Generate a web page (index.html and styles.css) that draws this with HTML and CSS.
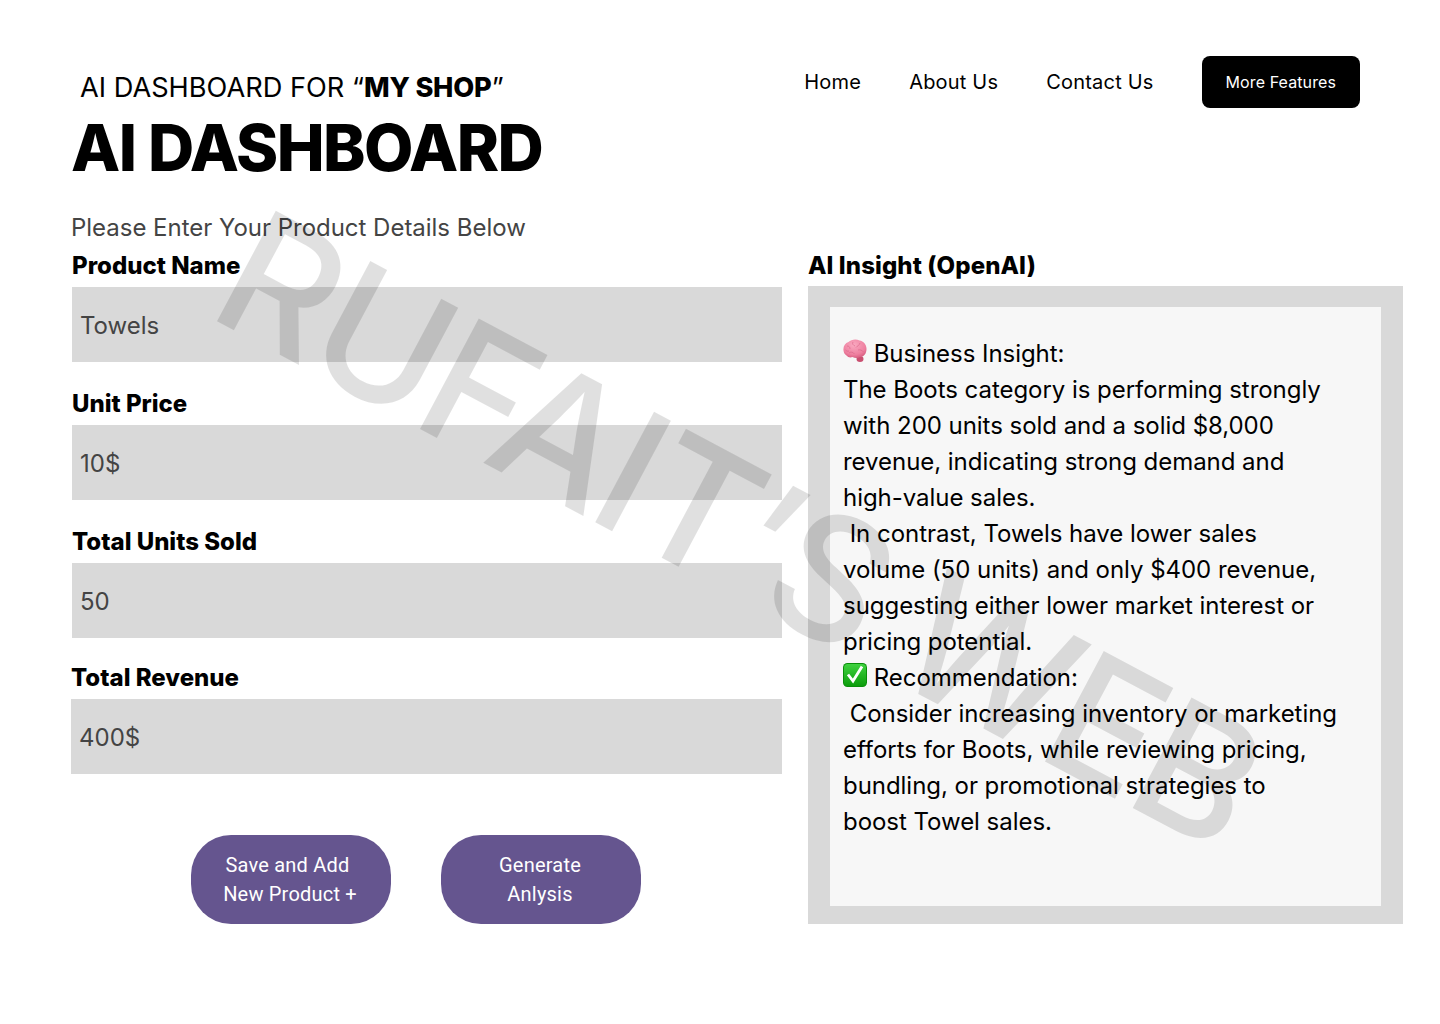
FILE: index.html
```html
<!DOCTYPE html>
<html lang="en">

<head>
    <meta charset="UTF-8">
    <meta name="viewport" content="width=device-width, initial-scale=1.0">
    <title>AI Dashboard</title>
    <link rel="stylesheet" href="styles.css">
</head>

<body>
    <div class="page">
        <header class="top">
            <div class="titles">
                <p class="subtitle">AI DASHBOARD FOR “<b>MY SHOP</b>”</p>
                <h1>AI DASHBOARD</h1>
            </div>
            <nav class="nav">
                <a href="#">Home</a>
                <a href="#">About Us</a>
                <a href="#">Contact Us</a>
                <a href="#" class="nav-btn">More Features</a>
            </nav>
        </header>

        <main class="main">
            <section class="form">
                <p class="intro">Please Enter Your Product Details Below</p>
                <div class="group">
                    <label>Product Name</label>
                    <div class="field">Towels</div>
                </div>
                <div class="group">
                    <label>Unit Price</label>
                    <div class="field">10$</div>
                </div>
                <div class="group">
                    <label>Total Units Sold</label>
                    <div class="field">50</div>
                </div>
                <div class="group group-last">
                    <label>Total Revenue</label>
                    <div class="field">400$</div>
                </div>
                <div class="actions">
                    <button>Save and Add&nbsp;<br>New Product +</button>
                    <button>Generate<br>Anlysis</button>
                </div>
            </section>

            <section class="insight">
                <h2>AI Insight (OpenAI)</h2>
                <div class="panel">
                    <div class="panel-text">
                        <svg class="emoji" viewBox="0 0 24 24">
                            <defs>
                                <radialGradient id="brain" cx="0.45" cy="0.3" r="0.8">
                                    <stop offset="0" stop-color="#f9a9c0"/>
                                    <stop offset="0.65" stop-color="#ee7f9f"/>
                                    <stop offset="1" stop-color="#cf4f74"/>
                                </radialGradient>
                            </defs>
                            <ellipse cx="17" cy="20" rx="3.500" ry="3" fill="#c94f70"/>
                            <path fill="url(#brain)" d="M.5 11.500C0 7.500 2 4 5.500 3 8 .5 13-.5 16.500 1.500c4 .5 7 4 7 8.500 0 4.500-2.500 7.500-6 8-3 1.500-6 1-8 0-2 1-4.500.5-6-1.500-1.700-1-2.800-3-3-5z"/>
                            <path fill="none" stroke="#d65f83" stroke-width="0.800" opacity="0.700" d="M4 7c2 0 3 1 3 3M10 3c-1 2 0 3 2 4M17 4c-.5 2.500-2.500 2.500-4 4.500M6 14c2-1.500 4-1 5.500 1M15 11c2-.5 4 0 5.500 2M2.500 11c1 1 2 1.500 3.500 1"/>
                        </svg> Business Insight:<br>
                        The Boots category is performing strongly with 200 units sold and a solid $8,000 revenue, indicating strong demand and high-value sales.<br>
                        &nbsp;In contrast, Towels have lower sales volume (50 units) and only $400 revenue, suggesting either lower market interest or pricing potential.<br>
                        <svg class="emoji" viewBox="0 0 24 24">
                            <defs>
                                <linearGradient id="tick" x1="0" y1="0" x2="0" y2="1">
                                    <stop offset="0" stop-color="#3fd23f"/>
                                    <stop offset="1" stop-color="#0c9d0c"/>
                                </linearGradient>
                            </defs>
                            <rect width="24" height="24" rx="4.500" fill="#0a8f0a"/>
                            <rect x="1" y="1" width="22" height="22" rx="3.500" fill="url(#tick)"/>
                            <path fill="none" stroke="#fff" stroke-width="2.800" d="M5 11.500l5 6.500L19 3.500"/>
                        </svg> Recommendation:<br>
                        &nbsp;Consider increasing inventory or marketing efforts for Boots, while reviewing pricing, bundling, or promotional strategies to<br>boost Towel sales.
                    </div>
                </div>
            </section>
        </main>
    </div>
    <div class="watermark">RUFAIT’S WEB</div>
</body>

</html>
```

FILE: styles.css
```css
* {
    margin: 0;
    padding: 0;
    box-sizing: border-box;
}

body {
    position: relative;
    height: 1024px;
    overflow: hidden;
    background-color: #fff;
    color: #000;
    font-family: Inter, "Liberation Sans", sans-serif;
}

.page {
    padding: 56px 37px 0 71px;
}

.top {
    display: flex;
    justify-content: space-between;
    align-items: flex-start;
    padding-right: 43px;
    height: 157px;
}

.subtitle {
    margin-top: 14px;
    padding-left: 9px;
    font-size: 27.2px;
    line-height: 36px;
}

.subtitle b {
    font-weight: 800;
    letter-spacing: -0.2px;
}

h1 {
    font-size: 64px;
    line-height: 78px;
    font-weight: 800;
    letter-spacing: -1.55px;
    margin-top: 3px;
}

.nav {
    display: flex;
    align-items: center;
    gap: 48px;
    height: 52px;
}

.nav a {
    color: #000;
    text-decoration: none;
    font-size: 20px;
    letter-spacing: 0.2px;
}

.nav .nav-btn {
    display: flex;
    align-items: center;
    height: 52px;
    padding: 0 24px;
    background-color: #000;
    border-radius: 8px;
    color: #fff;
    font-size: 16px;
    letter-spacing: 0.1px;
}

.main {
    display: grid;
    grid-template-columns: 711px 595px;
    gap: 26px;
}

.intro {
    font-size: 24px;
    line-height: 30px;
    letter-spacing: -0.02px;
    color: #444;
    margin-bottom: 7px;
}

.group {
    margin-left: 1px;
    margin-bottom: 26px;
}

.group:nth-of-type(3) {
    margin-bottom: 24px;
}

.group-last {
    margin-left: 0;
    margin-bottom: 0;
}

.group label {
    display: block;
    font-size: 24px;
    line-height: 32px;
    height: 30px;
    font-weight: 800;
    margin-bottom: 7px;
}

.field {
    height: 75px;
    padding-left: 8px;
    background-color: #d9d9d9;
    color: #444;
    font-size: 24px;
    line-height: 77px;
}

.actions {
    display: flex;
    gap: 50px;
    margin: 61px 0 0 120px;
}

.actions button {
    width: 200px;
    height: 89px;
    padding-right: 2px;
    border: 0;
    border-radius: 40px;
    background-color: #65558f;
    color: #fff;
    font-family: Roboto, sans-serif;
    font-size: 20px;
    line-height: 29px;
    letter-spacing: 0.2px;
}

.insight {
    display: flex;
    flex-direction: column;
    justify-content: flex-end;
}

.insight h2 {
    font-size: 24px;
    line-height: 32px;
    height: 30px;
    font-weight: 800;
    letter-spacing: 0.1px;
    margin-bottom: 6px;
}

.panel {
    height: 638px;
    padding: 21px 22px 18px;
    background-color: #d9d9d9;
}

.panel-text {
    height: 100%;
    padding: 29px 40px 0 13px;
    background-color: #f7f7f7;
    font-size: 24px;
    line-height: 36px;
    letter-spacing: -0.04px;
}

.emoji {
    width: 24px;
    height: 24px;
    vertical-align: -1px;
}

.watermark {
    position: absolute;
    left: 194px;
    top: 163px;
    transform-origin: 0 100%;
    transform: rotate(28deg);
    font-size: 172px;
    line-height: 172px;
    font-weight: 550;
    letter-spacing: -4.5px;
    white-space: nowrap;
    color: rgba(0, 0, 0, 0.12);
    pointer-events: none;
}
```
